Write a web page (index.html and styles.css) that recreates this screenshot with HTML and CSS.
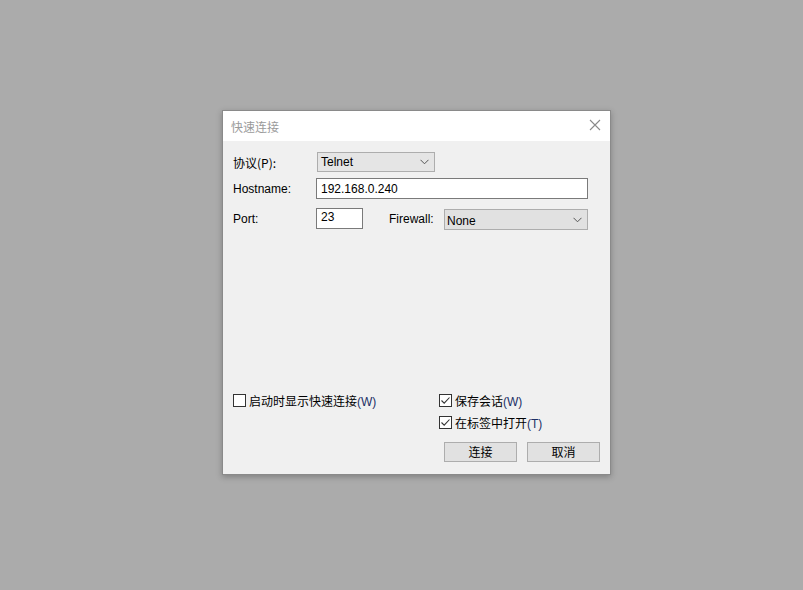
FILE: index.html
```html
<!DOCTYPE html>
<html lang="zh-CN">
<head>
  <meta charset="UTF-8">
  <title>快速连接</title>
  <link rel="stylesheet" href="styles.css">
</head>
<body>
  <div class="dialog">
    <div class="titlebar">
      <span class="title">快速连接</span>
      <svg class="close" width="12" height="12" viewBox="0 0 12 12">
        <path d="M1 1L11 11M11 1L1 11" stroke="#8a8a8a" stroke-width="1.1" fill="none"/>
      </svg>
    </div>
    <div class="content">
      <!-- connection fields -->
      <div class="row row-protocol">
        <label class="label">协议(P):</label>
        <div class="select select-protocol">
          <span>Telnet</span>
          <svg class="chevron" width="9" height="6" viewBox="0 0 9 6"><path d="M0.5 0.8L4.5 4.8L8.5 0.8" stroke="#555" stroke-width="1" fill="none"/></svg>
        </div>
      </div>
      <div class="row row-host">
        <label class="label">Hostname:</label>
        <div class="input input-host">192.168.0.240</div>
      </div>
      <div class="row row-port">
        <label class="label">Port:</label>
        <div class="input input-port">23</div>
        <label class="label-fw">Firewall:</label>
        <div class="select select-fw">
          <span>None</span>
          <svg class="chevron" width="9" height="6" viewBox="0 0 9 6"><path d="M0.5 0.8L4.5 4.8L8.5 0.8" stroke="#555" stroke-width="1" fill="none"/></svg>
        </div>
      </div>

      <!-- options and buttons -->
      <div class="bottom">
        <div class="options">
          <div class="check">
            <span class="box"></span>
            <span>启动时显示快速连接<span class="key">(W)</span></span>
          </div>
          <div class="options-right">
            <div class="check">
              <span class="box"><svg width="11" height="11" viewBox="0 0 11 11"><path d="M1.5 5.5L4.2 8.2L9.5 2.5" stroke="#333" stroke-width="1.1" fill="none"/></svg></span>
              <span>保存会话<span class="key">(W)</span></span>
            </div>
            <div class="check">
              <span class="box"><svg width="11" height="11" viewBox="0 0 11 11"><path d="M1.5 5.5L4.2 8.2L9.5 2.5" stroke="#333" stroke-width="1.1" fill="none"/></svg></span>
              <span>在标签中打开<span class="key">(T)</span></span>
            </div>
          </div>
        </div>
        <div class="buttons">
          <button class="btn">连接</button>
          <button class="btn">取消</button>
        </div>
      </div>
    </div>
  </div>
</body>
</html>
```

FILE: styles.css
```css
/* Stylesheet */
body {
  margin: 0;
  background-color: #ababab;
  font-family: "Liberation Sans", "Noto Sans CJK SC", sans-serif;
  font-size: 12px;
  color: #000;
  padding: 110px 0 0 222px;
  height: 590px;
  box-sizing: border-box;
}

.dialog {
  width: 389px;
  height: 365px;
  box-sizing: border-box;
  border: 1px solid #8a8a8a;
  background-color: #f0f0f0;
  box-shadow: 0px 2px 6px rgba(0, 0, 0, 0.25);
  display: flex;
  flex-direction: column;
}

.titlebar {
  height: 30px;
  background-color: #ffffff;
  display: flex;
  align-items: center;
  justify-content: space-between;
  padding: 0 9px 0 8px;
}

.title {
  font-family: "Noto Sans CJK SC", sans-serif;
  color: #9a9a9a;
  font-size: 12px;
}

.close {
  margin-top: -2px;
}

.content {
  flex: 1;
  display: flex;
  flex-direction: column;
  padding: 11px 10px 12px 10px;
}

.row {
  display: flex;
  align-items: center;
}

.label {
  width: 83px;
  font-size: 12px;
}

.row-protocol .label {
  font-family: "Noto Sans CJK SC", sans-serif;
}

.select {
  box-sizing: border-box;
  height: 20px;
  background-color: #e5e5e5;
  border: 1px solid #adadad;
  display: flex;
  align-items: center;
  justify-content: space-between;
  padding: 0 5px 0 3px;
}

.select-protocol {
  width: 118px;
  margin-left: 1px;
}

.input {
  box-sizing: border-box;
  height: 21px;
  background-color: #ffffff;
  border: 1px solid #7a7a7a;
  padding: 0 4px;
  display: flex;
  align-items: center;
}

.input-host {
  width: 272px;
}

.row-host {
  margin-top: 6px;
}

.row-port {
  margin-top: 8px;
}

.input-port {
  width: 47px;
  align-items: flex-start;
  padding-top: 1px;
}

.label-fw {
  margin-left: 26px;
  width: 55px;
}

.select-fw {
  width: 144px;
  height: 21px;
  margin-top: 2px;
  background-color: #e1e1e1;
  padding-left: 2px;
}

.select-fw span {
  margin-top: 2px;
}

.bottom {
  margin-top: auto;
}

.options {
  display: flex;
}

.options > .check {
  width: 206px;
}

.options-right {
  display: flex;
  flex-direction: column;
  gap: 7px;
}

.check {
  display: flex;
  align-items: center;
  gap: 3px;
  font-family: "Noto Sans CJK SC", sans-serif;
  font-size: 12px;
  height: 15px;
}

.key {
  font-family: "Liberation Sans", sans-serif;
  color: #1c2f66;
}

.box {
  box-sizing: border-box;
  width: 13px;
  height: 13px;
  border: 1px solid #333;
  background-color: #ffffff;
  display: flex;
  align-items: center;
  justify-content: center;
}

.buttons {
  display: flex;
  justify-content: flex-end;
  gap: 10px;
  margin-top: 12px;
}

.btn {
  box-sizing: border-box;
  width: 73px;
  height: 20px;
  background-color: #e1e1e1;
  border: 1px solid #adadad;
  font-family: "Noto Sans CJK SC", sans-serif;
  font-size: 12px;
  padding: 0;
  line-height: 18px;
}
```
